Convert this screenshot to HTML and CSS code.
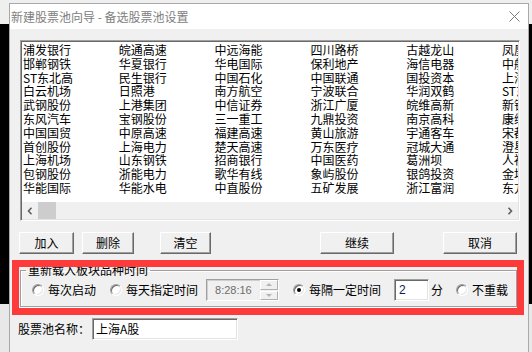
FILE: index.html
```html
<!DOCTYPE html>
<html lang="zh-CN">

<head>
    <meta charset="UTF-8" />
    <title>新建股票池向导 - 备选股票池设置</title>
    <link rel="stylesheet" href="styles.css">
</head>

<body>
    <div class="desk">
        <div class="win">
            <div class="titlebar">
                <span class="title">新建股票池向导 - 备选股票池设置</span>
                <svg class="close" width="11" height="11" viewBox="0 0 11 11">
                    <path d="M0.5 0.5 L10.5 10.5 M10.5 0.5 L0.5 10.5" stroke="#7a7a7a" stroke-width="1" fill="none" />
                </svg>
            </div>

            <div class="content">
                <div class="list">
                    <div class="cols">
                        <div class="col">
                            <span>浦发银行</span><span>邯郸钢铁</span><span>ST东北高</span><span>白云机场</span>
                            <span>武钢股份</span><span>东风汽车</span><span>中国国贸</span><span>首创股份</span>
                            <span>上海机场</span><span>包钢股份</span><span>华能国际</span>
                        </div>
                        <div class="col">
                            <span>皖通高速</span><span>华夏银行</span><span>民生银行</span><span>日照港</span>
                            <span>上港集团</span><span>宝钢股份</span><span>中原高速</span><span>上海电力</span>
                            <span>山东钢铁</span><span>浙能电力</span><span>华能水电</span>
                        </div>
                        <div class="col">
                            <span>中远海能</span><span>华电国际</span><span>中国石化</span><span>南方航空</span>
                            <span>中信证券</span><span>三一重工</span><span>福建高速</span><span>楚天高速</span>
                            <span>招商银行</span><span>歌华有线</span><span>中直股份</span>
                        </div>
                        <div class="col">
                            <span>四川路桥</span><span>保利地产</span><span>中国联通</span><span>宁波联合</span>
                            <span>浙江广厦</span><span>九鼎投资</span><span>黄山旅游</span><span>万东医疗</span>
                            <span>中国医药</span><span>象屿股份</span><span>五矿发展</span>
                        </div>
                        <div class="col">
                            <span>古越龙山</span><span>海信电器</span><span>国投资本</span><span>华润双鹤</span>
                            <span>皖维高新</span><span>南京高科</span><span>宇通客车</span><span>冠城大通</span>
                            <span>葛洲坝</span><span>银鸽投资</span><span>浙江富润</span>
                        </div>
                        <div class="col">
                            <span>凤凰股份</span><span>中船科技</span><span>上海建工</span><span>ST东电</span>
                            <span>新钢股份</span><span>康缘药业</span><span>宋都股份</span><span>澄星股份</span>
                            <span>人福医药</span><span>金地集团</span><span>东方航空</span>
                        </div>
                    </div>
                    <div class="hscroll">
                        <span class="sb-btn">
                            <svg width="6" height="8" viewBox="0 0 6 8"><path d="M4.5 0.8 L1.5 4 L4.5 7.2" stroke="#606060" stroke-width="1.6" fill="none" /></svg>
                        </span>
                        <span class="thumb"></span>
                        <span class="track"></span>
                        <span class="sb-btn">
                            <svg width="6" height="8" viewBox="0 0 6 8"><path d="M1.5 0.8 L4.5 4 L1.5 7.2" stroke="#606060" stroke-width="1.6" fill="none" /></svg>
                        </span>
                    </div>
                </div>

                <div class="btns">
                    <button class="btn btn-add">加入</button>
                    <button class="btn btn-del">删除</button>
                    <button class="btn btn-clear">清空</button>
                    <button class="btn btn-next">继续</button>
                    <button class="btn btn-cancel">取消</button>
                </div>

                <fieldset class="group">
                    <legend>重新载入板块品种时间</legend>
                    <div class="opts">
                        <span class="radio r1"></span><span class="opt-label">每次启动</span>
                        <span class="radio r2"></span><span class="opt-label">每天指定时间</span>
                        <div class="timebox">
                            <span class="time">8:28:16</span>
                            <span class="spin">
                                <span class="spin-btn"><i class="tri up"></i></span>
                                <span class="spin-btn"><i class="tri down"></i></span>
                            </span>
                        </div>
                        <span class="radio r3 checked"></span><span class="opt-label">每隔一定时间</span>
                        <div class="edit minutes">2</div>
                        <span class="unit">分</span>
                        <span class="radio r4"></span><span class="opt-label">不重载</span>
                    </div>
                </fieldset>

                <div class="name-row">
                    <span class="name-label">股票池名称：</span>
                    <div class="edit name-edit">上海A股</div>
                </div>
            </div>
        </div>
    </div>

    <div class="mark"></div>
</body>

</html>
```

FILE: styles.css
```css
body {
    margin: 0;
    width: 532px;
    height: 352px;
    overflow: hidden;
    font-family: "Noto Sans CJK SC", "Noto Sans", sans-serif;
    font-size: 12px;
    color: #000;
}

.desk {
    height: 352px;
    box-sizing: border-box;
    padding: 3px 0 0 9px;
    background: linear-gradient(#efefef 0 24px, #000 24px 304px, #e8e8e8 304px);
}

.win {
    width: 520px;
    height: 360px;
    box-sizing: border-box;
    border: 1px solid #a9a9a9;
    background: #f0f0f0;
}

.titlebar {
    height: 25px;
    background: #fff;
    display: flex;
    align-items: center;
    padding-left: 1px;
    padding-right: 8px;
}

.title {
    flex: 1;
    color: #808080;
    line-height: 14px;
}

.close {
    display: block;
}

.content {
    padding: 11px 0 0 10px;
}

/* list box */
.list {
    width: 500px;
    height: 181px;
    box-sizing: border-box;
    border: 1px solid;
    border-color: #a0a0a0 #fff #fff #a0a0a0;
    box-shadow: inset 1px 1px 0 #696969, inset -1px -1px 0 #e3e3e3;
    background: #fff;
    display: flex;
    flex-direction: column;
    padding: 1px;
}

.cols {
    flex: 1;
    display: flex;
    overflow: hidden;
    padding: 1px 0 0 1px;
}

.col {
    flex: none;
    width: 95.8px;
}

.col span {
    display: block;
    line-height: 13.8px;
    white-space: nowrap;
}

.hscroll {
    height: 17px;
    display: flex;
    background: #f0f0f0;
}

.sb-btn {
    width: 16px;
    display: flex;
    align-items: center;
    justify-content: center;
}

.thumb {
    width: 18px;
    background: #cdcdcd;
}

.track {
    flex: 1;
}

/* buttons */
.btns {
    display: flex;
    margin-top: 11px;
    height: 22px;
}

.btn {
    height: 22px;
    box-sizing: border-box;
    padding: 0;
    border: 1px solid;
    border-color: #fff #696969 #696969 #fff;
    box-shadow: inset -1px -1px 0 #a0a0a0;
    background: #f0f0f0;
    font-family: inherit;
    font-size: 12px;
    line-height: 14px;
    color: #000;
}

.btn-add {
    width: 55px;
    margin-left: -1px;
}

.btn-del {
    width: 52px;
    margin-left: 8px;
}

.btn-clear {
    width: 51px;
    margin-left: 26px;
}

.btn-next {
    width: 74px;
    margin-left: 109px;
}

.btn-cancel {
    width: 74px;
    margin-left: 49px;
}

/* group box */
.group {
    width: 497px;
    box-sizing: border-box;
    min-width: 0;
    margin: 10px 0 0 0;
    padding: 3px 0 5px 0;
    border: 1px solid #a0a0a0;
    box-shadow: inset 1px 1px 0 #fff, 1px 1px 0 #fff;
}

.group legend {
    margin-left: 5px;
    padding: 0 2px;
    line-height: 12px;
}

.opts {
    display: flex;
    align-items: center;
    height: 22px;
}

.radio {
    flex: none;
    width: 12px;
    height: 12px;
    box-sizing: border-box;
    border-radius: 50%;
    border: 1px solid;
    border-color: #a0a0a0 #fff #fff #a0a0a0;
    box-shadow: inset 1px 1px 0 #696969, inset -1px -1px 0 #e3e3e3;
    background: #fff;
    position: relative;
}

.radio.checked::after {
    content: "";
    position: absolute;
    left: 3px;
    top: 3px;
    width: 4px;
    height: 4px;
    border-radius: 50%;
    background: #000;
}

.opt-label {
    margin-left: 4px;
    line-height: 14px;
    white-space: nowrap;
}

.r1 {
    margin-left: 11px;
}

.r2 {
    margin-left: 14px;
}

.r3 {
    margin-left: 14px;
}

.r4 {
    margin-left: 13px;
}

.timebox {
    margin-left: 8px;
    width: 73px;
    height: 22px;
    box-sizing: border-box;
    border: 1px solid;
    border-color: #a0a0a0 #fff #fff #a0a0a0;
    box-shadow: inset 1px 1px 0 #cfcfcf;
    background: #f0f0f0;
    display: flex;
    align-items: center;
}

.time {
    flex: 1;
    padding-left: 8px;
    font-family: "Liberation Sans", sans-serif;
    font-size: 11px;
    color: #6d6d6d;
}

.spin {
    width: 18px;
    height: 20px;
    display: flex;
    flex-direction: column;
    gap: 1px;
}

.spin-btn {
    flex: 1;
    box-sizing: border-box;
    border: 1px solid;
    border-color: #fff #b0b0b0 #b0b0b0 #fff;
    display: flex;
    align-items: center;
    justify-content: center;
}

.tri {
    width: 0;
    height: 0;
    border-left: 3px solid transparent;
    border-right: 3px solid transparent;
}

.tri.up {
    border-bottom: 3px solid #b4b4b4;
}

.tri.down {
    border-top: 3px solid #b4b4b4;
}

.edit {
    box-sizing: border-box;
    height: 22px;
    border: 1px solid;
    border-color: #a0a0a0 #fff #fff #a0a0a0;
    box-shadow: inset 1px 1px 0 #696969, inset -1px -1px 0 #e3e3e3;
    background: #fff;
    display: flex;
    align-items: center;
    line-height: 14px;
}

.minutes {
    margin-left: 13px;
    width: 35px;
    padding-left: 4px;
    font-family: "Liberation Sans", sans-serif;
    font-size: 12px;
    color: #102050;
}

.unit {
    margin-left: 2px;
    line-height: 14px;
}

/* name row */
.name-row {
    display: flex;
    align-items: center;
    margin: 11px 0 0 -2px;
}

.name-label {
    width: 74px;
    line-height: 14px;
}

.name-edit {
    width: 146px;
    padding-left: 3px;
}

/* red highlight drawn over the dialog */
.mark {
    position: absolute;
    left: 12px;
    top: 260px;
    width: 512px;
    height: 55px;
    box-sizing: border-box;
    border: 7px solid #fd3b3b;
}
```
